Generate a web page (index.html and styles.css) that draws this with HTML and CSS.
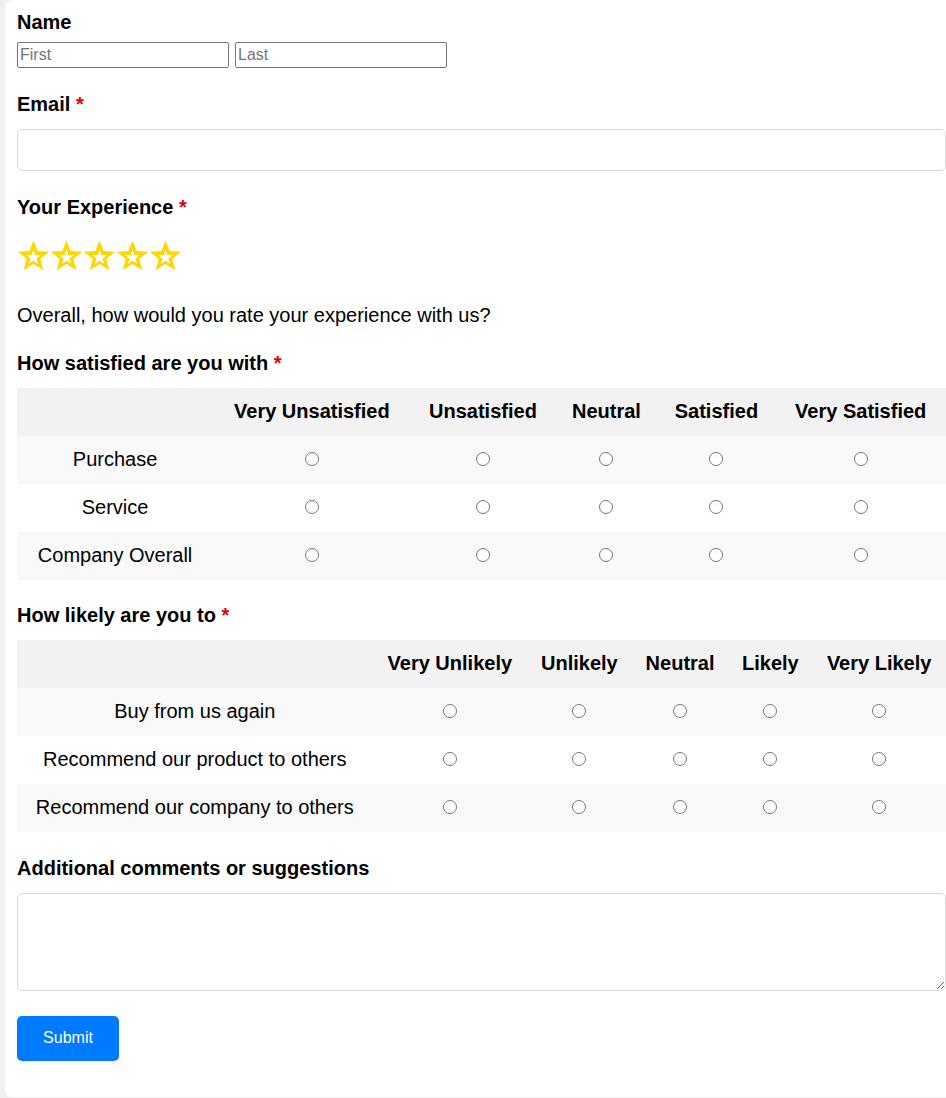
FILE: index.html
```html
<!DOCTYPE html>
<html lang="en">
<head>
<meta charset="utf-8">
<title>Feedback Form</title>
<link rel="stylesheet" href="styles.css">
</head>
<body>
<div class="card">
  <form class="form">
    <div class="group">
      <label class="label">Name</label>
      <div class="name-row">
        <input class="name-input" type="text" placeholder="First">
        <input class="name-input" type="text" placeholder="Last">
      </div>
    </div>

    <div class="group">
      <label class="label">Email <span class="req">*</span></label>
      <input class="text-input" type="email">
    </div>

    <div class="group exp">
      <label class="label">Your Experience <span class="req">*</span></label>
      <div class="stars">
        <svg class="star" viewBox="0 0 34 32"><polygon fill="#FFD700" points="17,0.5 21.3,11.3 33.2,12 24,19.6 27.2,31.3 17,24.8 6.8,31.3 10,19.6 0.8,12 12.7,11.3"/><polygon fill="#fff" points="17,10 18.8,15.6 24.6,15.8 20.1,19.2 21.7,24.5 17,21.3 12.3,24.5 13.9,19.2 9.4,15.8 15.2,15.6"/></svg>
        <svg class="star" viewBox="0 0 34 32"><polygon fill="#FFD700" points="17,0.5 21.3,11.3 33.2,12 24,19.6 27.2,31.3 17,24.8 6.8,31.3 10,19.6 0.8,12 12.7,11.3"/><polygon fill="#fff" points="17,10 18.8,15.6 24.6,15.8 20.1,19.2 21.7,24.5 17,21.3 12.3,24.5 13.9,19.2 9.4,15.8 15.2,15.6"/></svg>
        <svg class="star" viewBox="0 0 34 32"><polygon fill="#FFD700" points="17,0.5 21.3,11.3 33.2,12 24,19.6 27.2,31.3 17,24.8 6.8,31.3 10,19.6 0.8,12 12.7,11.3"/><polygon fill="#fff" points="17,10 18.8,15.6 24.6,15.8 20.1,19.2 21.7,24.5 17,21.3 12.3,24.5 13.9,19.2 9.4,15.8 15.2,15.6"/></svg>
        <svg class="star" viewBox="0 0 34 32"><polygon fill="#FFD700" points="17,0.5 21.3,11.3 33.2,12 24,19.6 27.2,31.3 17,24.8 6.8,31.3 10,19.6 0.8,12 12.7,11.3"/><polygon fill="#fff" points="17,10 18.8,15.6 24.6,15.8 20.1,19.2 21.7,24.5 17,21.3 12.3,24.5 13.9,19.2 9.4,15.8 15.2,15.6"/></svg>
        <svg class="star" viewBox="0 0 34 32"><polygon fill="#FFD700" points="17,0.5 21.3,11.3 33.2,12 24,19.6 27.2,31.3 17,24.8 6.8,31.3 10,19.6 0.8,12 12.7,11.3"/><polygon fill="#fff" points="17,10 18.8,15.6 24.6,15.8 20.1,19.2 21.7,24.5 17,21.3 12.3,24.5 13.9,19.2 9.4,15.8 15.2,15.6"/></svg>
      </div>
      <p class="hint">Overall, how would you rate your experience with us?</p>
    </div>

    <div class="group group-tight">
      <label class="label">How satisfied are you with <span class="req">*</span></label>
      <table class="matrix">
        <thead>
          <tr><th></th><th>Very Unsatisfied</th><th>Unsatisfied</th><th>Neutral</th><th>Satisfied</th><th>Very Satisfied</th></tr>
        </thead>
        <tbody>
          <tr><td>Purchase</td><td><input class="radio" type="radio" name="s1"></td><td><input class="radio" type="radio" name="s1"></td><td><input class="radio" type="radio" name="s1"></td><td><input class="radio" type="radio" name="s1"></td><td><input class="radio" type="radio" name="s1"></td></tr>
          <tr><td>Service</td><td><input class="radio" type="radio" name="s2"></td><td><input class="radio" type="radio" name="s2"></td><td><input class="radio" type="radio" name="s2"></td><td><input class="radio" type="radio" name="s2"></td><td><input class="radio" type="radio" name="s2"></td></tr>
          <tr><td>Company Overall</td><td><input class="radio" type="radio" name="s3"></td><td><input class="radio" type="radio" name="s3"></td><td><input class="radio" type="radio" name="s3"></td><td><input class="radio" type="radio" name="s3"></td><td><input class="radio" type="radio" name="s3"></td></tr>
        </tbody>
      </table>
    </div>

    <div class="group">
      <label class="label">How likely are you to <span class="req">*</span></label>
      <table class="matrix">
        <thead>
          <tr><th></th><th>Very Unlikely</th><th>Unlikely</th><th>Neutral</th><th>Likely</th><th>Very Likely</th></tr>
        </thead>
        <tbody>
          <tr><td>Buy from us again</td><td><input class="radio" type="radio" name="l1"></td><td><input class="radio" type="radio" name="l1"></td><td><input class="radio" type="radio" name="l1"></td><td><input class="radio" type="radio" name="l1"></td><td><input class="radio" type="radio" name="l1"></td></tr>
          <tr><td>Recommend our product to others</td><td><input class="radio" type="radio" name="l2"></td><td><input class="radio" type="radio" name="l2"></td><td><input class="radio" type="radio" name="l2"></td><td><input class="radio" type="radio" name="l2"></td><td><input class="radio" type="radio" name="l2"></td></tr>
          <tr><td>Recommend our company to others</td><td><input class="radio" type="radio" name="l3"></td><td><input class="radio" type="radio" name="l3"></td><td><input class="radio" type="radio" name="l3"></td><td><input class="radio" type="radio" name="l3"></td><td><input class="radio" type="radio" name="l3"></td></tr>
        </tbody>
      </table>
    </div>

    <div class="group">
      <label class="label">Additional comments or suggestions</label>
      <textarea class="textarea"></textarea>
    </div>

    <button class="submit" type="button">Submit</button>
  </form>
</div>
</body>
</html>
```

FILE: styles.css
```css
html, body {
  margin: 0;
  padding: 0;
}
body {
  background: #f0f0f0;
  font-family: "Liberation Sans", Arial, sans-serif;
  color: #000;
  overflow-x: hidden;
  padding-left: 5px;
}
.card {
  background: #fff;
  width: 929px;
  padding: 10px 12px 36px 12px;
  border-radius: 8px;
}
.form {
  display: flex;
  flex-direction: column;
}
.group {
  display: flex;
  flex-direction: column;
  margin-bottom: 24px;
}
.group-tight {
  margin-bottom: 23px;
}
.label {
  display: block;
  font-size: 20px;
  font-weight: bold;
  line-height: 23px;
  padding-top: 1px;
  margin-bottom: 13px;
}
.group:first-child .label {
  margin-bottom: 8px;
}
.req {
  color: #e00000;
}
.name-row {
  display: flex;
  gap: 6px;
}
.name-input {
  box-sizing: border-box;
  width: 212px;
  height: 26px;
  margin: 0;
  border: 1px solid #767676;
  border-radius: 2px;
  padding: 1px 2px;
  font-family: "Liberation Sans", Arial, sans-serif;
  font-size: 16px;
}
.name-input::placeholder {
  color: #757575;
}
.text-input {
  box-sizing: border-box;
  width: 100%;
  height: 42px;
  margin: 0;
  border: 1px solid #d9d9d9;
  border-radius: 5px;
  padding: 8px 10px;
  font-size: 16px;
}
.exp .label {
  margin-bottom: 21px;
}
.stars {
  display: flex;
  height: 31px;
}
.star {
  width: 33px;
  height: 31px;
  display: block;
}
.hint {
  margin: 33px 0 0 0;
  font-size: 20px;
  line-height: 23px;
}
.matrix {
  width: 100%;
  border-collapse: collapse;
  font-size: 20px;
}
.matrix th,
.matrix td {
  height: 46px;
  padding: 0 12px 2px;
  text-align: center;
  vertical-align: middle;
}
.matrix th {
  background: #f2f2f2;
  font-weight: bold;
}
.matrix tbody tr:nth-child(odd) td {
  background: #f9f9f9;
}
.radio {
  appearance: none;
  -webkit-appearance: none;
  display: block;
  box-sizing: border-box;
  width: 14px;
  height: 14px;
  margin: 0 auto;
  border: 1px solid #767676;
  border-radius: 50%;
  background: #fff;
}
.textarea {
  box-sizing: border-box;
  width: 100%;
  height: 98px;
  margin: 0;
  border: 1px solid #d9d9d9;
  border-radius: 5px;
  padding: 8px 10px;
  font-family: "Liberation Sans", Arial, sans-serif;
  font-size: 16px;
  resize: vertical;
}
.submit {
  align-self: flex-start;
  margin-top: 1px;
  width: 102px;
  height: 45px;
  background: #007bff;
  color: #fff;
  border: none;
  border-radius: 5px;
  font-family: "Liberation Sans", Arial, sans-serif;
  font-size: 16px;
  padding: 0 0 1px 0;
  cursor: pointer;
}
```
